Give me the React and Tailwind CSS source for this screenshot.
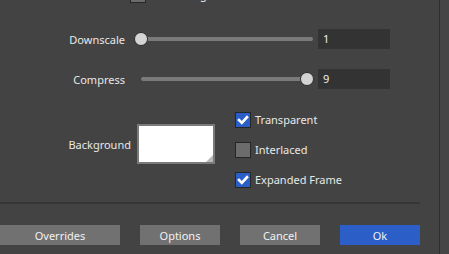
import React from 'react'

const FONT = { fontFamily: '"Noto Sans", "Open Sans", sans-serif' }

function Check({ checked }) {
  return (
    <span
      className={
        'w-[16px] h-[16px] border border-[#262626] flex items-center justify-center shrink-0 ' +
        (checked ? 'bg-[#2c5ec7]' : 'bg-[#6c6c6c]')
      }
    >
      {checked && (
        <svg width="12" height="12" viewBox="0 0 12 12">
          <path d="M2 6 L4.8 8.8 L10 3.2" fill="none" stroke="#fff" strokeWidth="2.6" strokeLinecap="square" />
        </svg>
      )}
    </span>
  )
}

function CheckRow({ label, checked }) {
  return (
    <div className="flex items-center h-[16px] gap-[4px]">
      <Check checked={checked} />
      <span className="text-[11px] text-[#e8e8e8] leading-none -translate-y-[1px]">{label}</span>
    </div>
  )
}

function Slider({ value, min, max }) {
  const pct = (value - min) / (max - min)
  return (
    <div className="relative w-[180px] h-[14px]">
      <div className="absolute left-[7px] right-[1px] top-[5px] h-[4px] rounded-full bg-[#7a7a7a]" />
      <div
        className="absolute top-0 w-[14px] h-[14px] rounded-full bg-[#d4d4d4] border border-[#2f2f2f]"
        style={{ left: pct * 166 }}
      />
    </div>
  )
}

function SliderRow({ label, value, min, max, className = '' }) {
  return (
    <div className={'flex items-center h-[20px] ' + className}>
      <span className="w-[125px] text-right text-[11px] text-[#e8e8e8] leading-none">{label}</span>
      <div className="ml-[9px]">
        <Slider value={value} min={min} max={max} />
      </div>
      <div className="ml-[4px] w-[72px] h-[20px] bg-[#333333] flex items-center pl-[5px] text-[11px] text-[#f0f0f0]">
        {value}
      </div>
    </div>
  )
}

function Btn({ children, blue, wide }) {
  return (
    <button
      className={
        'h-[20px] text-[11px] text-[#f2f2f2] leading-none ' +
        (wide ? 'w-[120px] ' : 'w-[80px] ') +
        (blue ? 'bg-[#2c5ec7]' : 'bg-[#717171]')
      }
    >
      {children}
    </button>
  )
}

export default function App() {
  return (
    <div className="w-[449px] h-[254px] overflow-hidden bg-[#434343] flex" style={FONT}>
      <div className="w-[439px] flex flex-col">
        {/* cut-off option row above */}
        <div className="mt-[-13px] h-[15px] flex items-center ml-[130px] gap-[4px]">
          <Check checked={false} />
          <span className="text-[11px] text-[#e8e8e8] leading-none">Smoothing</span>
        </div>

        <SliderRow label="Downscale" value={1} min={1} max={9} className="mt-[27px]" />
        <SliderRow label="Compress" value={9} min={0} max={9} className="mt-[20px]" />

        <div className="mt-[23px] flex">
          <div className="flex items-center h-[40px] mt-[12px]">
            <span className="w-[131px] text-right text-[11px] text-[#e8e8e8] leading-none">Background</span>
            <div className="ml-[6px] w-[78px] h-[40px] border-2 border-[#7a7a7a] bg-white relative">
              <div className="absolute right-0 bottom-0 w-0 h-0 border-l-[7px] border-l-transparent border-b-[7px] border-b-[#b8b8b8]" />
            </div>
          </div>
          <div className="ml-[20px] flex flex-col gap-[14px]">
            <CheckRow label="Transparent" checked />
            <CheckRow label="Interlaced" checked={false} />
            <CheckRow label="Expanded Frame" checked />
          </div>
        </div>

        <div className="mt-[14px] w-[420px] h-[2px] bg-[#363636]" />

        <div className="mt-[21px] flex gap-[20px]">
          <Btn wide>Overrides</Btn>
          <Btn>Options</Btn>
          <Btn>Cancel</Btn>
          <Btn blue>Ok</Btn>
        </div>
      </div>
      <div className="w-[1px] bg-[#2e2e2e]" />
      <div className="flex-1 bg-[#454545]" />
    </div>
  )
}
